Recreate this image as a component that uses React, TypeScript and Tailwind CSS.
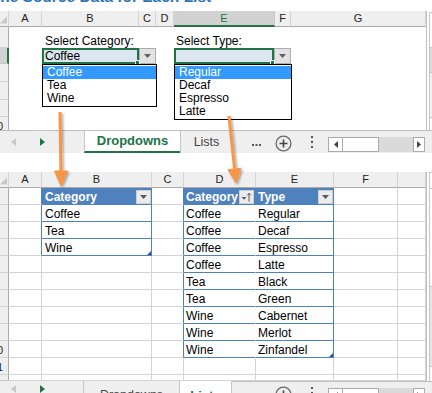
import React from 'react';

const FONT = "font-['Liberation_Sans',Arial,sans-serif]";

function DownTri({ color = '#595959' }: { color?: string }) {
  return (
    <svg width="7" height="4" viewBox="0 0 7 4">
      <path d="M0 0H7L3.5 4Z" fill={color} />
    </svg>
  );
}

function FilterBtn({ sort = false }: { sort?: boolean }) {
  return (
    <div className="w-[15px] h-[14px] bg-[#ececec] border border-[#cfcfcf] flex items-center justify-center shrink-0">
      {sort ? (
        <svg width="11" height="10" viewBox="0 0 11 10">
          <path d="M0.5 5H5.5L3 7.8Z" fill="#595959" />
          <path d="M8 9.5V1.5" stroke="#595959" strokeWidth="1" />
          <path d="M6.3 3.3L8 1.2L9.7 3.3" stroke="#595959" strokeWidth="1" fill="none" />
        </svg>
      ) : (
        <DownTri />
      )}
    </div>
  );
}

function Corner() {
  return (
    <div className="bg-[#efefef] border-r border-r-[#d4d4d4] border-b border-b-[#ababab] flex items-end justify-end overflow-hidden">
      <svg width="8" height="8" viewBox="0 0 8 8" className="mb-[2px] mr-px">
        <path d="M8 0V8H0Z" fill="#c8c8c8" />
      </svg>
    </div>
  );
}

function Title() {
  return (
    <div className="h-[11px] overflow-hidden">
      <div className="-mt-[12px] -ml-[5px] whitespace-nowrap text-[15.5px] leading-[18px] font-bold text-[#2e74b5]">
        the Source Data for Each List
      </div>
    </div>
  );
}

function Combo({ value, w, bw, lw, items }: { value: string; w: string; bw: string; lw: string; items: string[] }) {
  return (
    <div className="relative flex h-full">
      <div className={`${w} h-full border-2 border-[#217346] bg-[#dce6f1] flex items-center pl-px text-[12px] leading-[14px] relative`}>
        {value}
        <div className="absolute right-[-3px] bottom-[-3px] w-[5px] h-[5px] bg-[#217346] border border-white" />
      </div>
      <div className={`${bw} h-full bg-[#e3e3e3] border border-[#adadad] flex items-center justify-center`}>
        <DownTri color="#606060" />
      </div>
      <div className={`absolute left-0 top-full ${lw} border border-black bg-white py-px z-10`}>
        {items.map((it, i) => (
          <div
            key={it}
            className={
              i === 0
                ? 'h-[13px] leading-[13px] pl-[4px] text-[12px] bg-[#3399ff] text-white'
                : 'h-[13px] leading-[13px] pl-[4px] text-[12px] text-black'
            }
          >
            {it}
          </div>
        ))}
      </div>
    </div>
  );
}

function TopSheet() {
  const cols = ['A', 'B', 'C', 'D', 'E', 'F', 'G'];
  return (
    <div className="flex">
      <div className="grid w-[427px] grid-cols-[9px_33px_97px_17px_18px_101px_16px_135px] grid-rows-[16px_21px_16px_18px_18px_17px_13px] border-r border-r-[#bfbfbf]">
        <Corner />
        {cols.map((c) => (
          <div
            key={c}
            className={
              c === 'E'
                ? 'flex items-center justify-center bg-[#d2d2d2] border-r border-r-[#c6c6c6] border-b-2 border-b-[#217346] text-[11px] text-[#217346]'
                : 'flex items-center justify-center bg-[#efefef] border-r border-r-[#d4d4d4] border-b border-b-[#ababab] text-[11px] text-[#222]'
            }
          >
            {c}
          </div>
        ))}
        <div className="col-start-1 row-start-2 bg-[#efefef] border-r border-r-[#ababab] border-b border-b-[#d4d4d4]" />
        <div className="col-start-1 row-start-3 bg-[#d2d2d2] border-r-2 border-r-[#217346] border-b border-b-[#c6c6c6]" />
        <div className="col-start-1 row-start-4 bg-[#efefef] border-r border-r-[#ababab] border-b border-b-[#d4d4d4]" />
        <div className="col-start-1 row-start-5 bg-[#efefef] border-r border-r-[#ababab] border-b border-b-[#d4d4d4]" />
        <div className="col-start-1 row-start-6 bg-[#efefef] border-r border-r-[#ababab] border-b border-b-[#d4d4d4]" />
        <div className="col-start-1 row-start-7 bg-[#efefef] border-r border-r-[#ababab] overflow-hidden text-[11px] leading-[13px] text-[#222] pt-[3px]">
          <span className="block -ml-[3px]">0</span>
        </div>

        <div className="col-start-3 col-span-2 row-start-2 flex items-end pl-[3px] text-[12px] leading-[14px] whitespace-nowrap">
          Select Category:
        </div>
        <div className="col-start-6 col-span-2 row-start-2 flex items-end pl-[2px] text-[12px] leading-[14px] whitespace-nowrap">
          Select Type:
        </div>
        <div className="col-start-3 col-span-2 row-start-3">
          <Combo value="Coffee" w="w-[97px]" bw="w-[17px]" lw="w-[115px]" items={['Coffee', 'Tea', 'Wine']} />
        </div>
        <div className="col-start-6 col-span-2 row-start-3">
          <Combo value="" w="w-[101px]" bw="w-[17px]" lw="w-[118px]" items={['Regular', 'Decaf', 'Espresso', 'Latte']} />
        </div>
      </div>
      <div className="w-[5px] flex">
        <div className="w-[2px]" />
        <div className="w-[3px] mt-px flex flex-col border-l border-[#c6c6c6]">
          <div className="h-[35px] bg-white border-t border-[#c6c6c6]" />
          <div className="h-[25px] bg-[#dcdcdc] border-t border-[#c6c6c6]" />
          <div className="h-[45px] bg-[#f0f0f0] border-t border-[#c6c6c6]" />
          <div className="flex-1 bg-white border-t border-[#c6c6c6]" />
        </div>
      </div>
    </div>
  );
}

function HScroll() {
  return (
    <div className="w-[97px] h-[15px] flex mt-[6px]">
      <div className="w-[15px] h-full bg-white border border-[#ababab] flex items-center justify-center">
        <svg width="4" height="7" viewBox="0 0 4 7">
          <path d="M4 0V7L0 3.5Z" fill="#444" />
        </svg>
      </div>
      <div className="w-[36px] h-full bg-white border-y border-r border-[#ababab]" />
      <div className="w-[34px] h-full bg-[#dadada]" />
      <div className="w-[12px] h-full bg-white border border-[#ababab] flex items-center justify-center">
        <svg width="4" height="7" viewBox="0 0 4 7">
          <path d="M0 0V7L4 3.5Z" fill="#444" />
        </svg>
      </div>
    </div>
  );
}

function BarTools() {
  return (
    <>
      <div className="w-[43px] flex items-center">
        <svg width="9" height="2" viewBox="0 0 9 2" className="ml-[20px] mt-[5px]">
          <rect x="0" y="0" width="2" height="2" fill="#555" />
          <rect x="3.5" y="0" width="2" height="2" fill="#555" />
          <rect x="7" y="0" width="2" height="2" fill="#555" />
        </svg>
      </div>
      <div className="w-[17px] pt-[4px]">
        <svg width="17" height="17" viewBox="0 0 17 17">
          <circle cx="8.5" cy="8.5" r="7.4" fill="none" stroke="#6a6a6a" strokeWidth="1.3" />
          <path d="M8.5 4.5V12.5M4.5 8.5H12.5" stroke="#444" strokeWidth="1.6" />
        </svg>
      </div>
      <div className="w-[36px] flex items-center justify-center pl-[4px]">
        <svg width="2" height="12" viewBox="0 0 2 12">
          <rect x="0" y="0" width="2" height="2" fill="#555" />
          <rect x="0" y="5" width="2" height="2" fill="#555" />
          <rect x="0" y="10" width="2" height="2" fill="#555" />
        </svg>
      </div>
      <HScroll />
    </>
  );
}

function NavArrows() {
  return (
    <div className="w-[84px] h-[22px] flex items-center shrink-0">
      <svg width="5" height="8" viewBox="0 0 5 8" className="ml-[11px]">
        <path d="M5 0V8L0 4Z" fill="#c8c8c8" />
      </svg>
      <svg width="5" height="8" viewBox="0 0 5 8" className="ml-[24px]">
        <path d="M0 0V8L5 4Z" fill="#217346" />
      </svg>
    </div>
  );
}

function TopBar() {
  return (
    <div className="h-[23px] flex bg-[#efefef] border-t border-[#bfbfbf]">
      <NavArrows />
      <div className="w-[96px] bg-white border-l border-[#c6c6c6] border-b-2 border-b-[#217346] flex items-center justify-center font-bold text-[13px] text-[#217346]">
        Dropdowns
      </div>
      <div className="w-[52px] border-l border-[#c6c6c6] flex items-center justify-center text-[12.5px] text-[#444]">
        Lists
      </div>
      <BarTools />
    </div>
  );
}

function BottomBar() {
  return (
    <div className="h-[23px] flex">
      <div className="w-[180px] flex flex-col">
        <div className="h-[3px] bg-white" />
        <div className="flex-1 flex bg-[#efefef] border-t border-[#c6c6c6] -mt-px">
          <div className="w-[84px] border-r border-[#c6c6c6] -mt-[3px]">
            <NavArrows />
          </div>
          <div className="w-[96px] border-r border-[#c6c6c6] flex justify-center pt-[5px] text-[12.5px] text-[#444]">
            Dropdowns
          </div>
        </div>
      </div>
      <div className="w-[52px] bg-white border-r border-[#c6c6c6] border-b-2 border-b-[#217346] flex justify-center pt-[5px] font-bold text-[13px] text-[#217346]">
        Lists
      </div>
      <div className="flex-1 flex bg-[#efefef] border-t border-[#bfbfbf]">
        <BarTools />
      </div>
    </div>
  );
}

const t2data = [
  ['Category', 'Type'],
  ['Coffee', 'Regular'],
  ['Coffee', 'Decaf'],
  ['Coffee', 'Espresso'],
  ['Coffee', 'Latte'],
  ['Tea', 'Black'],
  ['Tea', 'Green'],
  ['Wine', 'Cabernet'],
  ['Wine', 'Merlot'],
  ['Wine', 'Zinfandel'],
];
const t1data = ['Category', 'Coffee', 'Tea', 'Wine'];

function Handle() {
  return (
    <svg width="4" height="4" viewBox="0 0 4 4" className="absolute right-0 bottom-0">
      <path d="M4 0V4H0Z" fill="#2f4f9f" />
    </svg>
  );
}

function cellClass(r: number, c: number) {
  if (c === 0) {
    return 'bg-[#efefef] border-r border-r-[#ababab] border-b border-b-[#d4d4d4] overflow-hidden text-[11px] leading-[14px] text-[#222] flex items-end';
  }
  const t1 = c === 2 && r <= 3;
  const t2 = (c === 4 || c === 5) && r <= 9;
  const inT = t1 || t2;
  const head = inT && r === 0;
  let rb = 'border-r-[#d4d4d4]';
  if (t1) rb = 'border-r-[#4f81bd]';
  else if (t2) rb = c === 5 || head ? 'border-r-[#4f81bd]' : 'border-r-white';
  else if ((c === 1 && r <= 3) || (c === 3 && r <= 9)) rb = 'border-r-[#4f81bd]';
  const bb = inT ? 'border-b-[#4f81bd]' : 'border-b-[#d4d4d4]';
  const bg = head ? 'bg-[#4f81bd] text-white font-bold' : 'bg-white text-black';
  const pad = c === 2 ? 'pl-[3px]' : c === 4 || c === 5 ? 'pl-[2px]' : '';
  return `relative flex items-end justify-between border-r border-b ${rb} ${bb} ${bg} ${pad} text-[12px] leading-[14px] whitespace-nowrap overflow-hidden`;
}

function BottomSheet() {
  const cols = ['', 'A', 'B', 'C', 'D', 'E', 'F', ''];
  const rows = Array.from({ length: 12 }, (_, i) => i);
  const rowNum: Record<number, string> = { 9: '0', 10: '1' };
  return (
    <div className="flex">
      <div className="grid w-[427px] grid-cols-[9px_33px_110px_32px_72px_78px_64px_28px] grid-rows-[16px_repeat(11,17px)_6px] border-r border-r-[#bfbfbf]">
        <Corner />
        {cols.slice(1).map((c, i) => (
          <div
            key={'h' + i}
            className="flex items-center justify-center bg-[#efefef] border-r border-r-[#d4d4d4] border-b border-b-[#ababab] text-[11px] text-[#222]"
          >
            {c}
          </div>
        ))}
        {rows.map((r) =>
          cols.map((_, c) => {
            let content: React.ReactNode = null;
            if (c === 0 && rowNum[r]) {
              content = <span className="block -ml-[3px]">{rowNum[r]}</span>;
            } else if (c === 2 && r <= 3) {
              content = (
                <>
                  <span>{t1data[r]}</span>
                  {r === 0 && <FilterBtn />}
                  {r === 3 && <Handle />}
                </>
              );
            } else if ((c === 4 || c === 5) && r <= 9) {
              content = (
                <>
                  <span>{t2data[r][c - 4]}</span>
                  {r === 0 && (
                    <div className={c === 4 ? 'mr-px' : ''}>
                      <FilterBtn sort={c === 4} />
                    </div>
                  )}
                  {r === 9 && c === 5 && <Handle />}
                </>
              );
            }
            return (
              <div key={r + '-' + c} className={cellClass(r, c)}>
                {content}
              </div>
            );
          })
        )}
      </div>
      <div className="w-[5px] flex">
        <div className="w-[2px]" />
        <div className="w-[3px] flex flex-col border-l border-[#c6c6c6]">
          <div className="h-[16px] bg-white border-t border-[#c6c6c6]" />
          <div className="h-[98px] bg-white border-t border-[#c6c6c6]" />
          <div className="h-[80px] bg-[#e6e6e6] border-t border-[#c6c6c6]" />
          <div className="flex-1 bg-white border-t border-[#c6c6c6]" />
        </div>
      </div>
    </div>
  );
}

function Arrows() {
  return (
    <svg width="432" height="393" viewBox="0 0 432 393" className="absolute inset-0 pointer-events-none z-20">
      <defs>
        <filter id="sh" x="-50%" y="-50%" width="200%" height="200%">
          <feDropShadow dx="1.5" dy="1.5" stdDeviation="1" floodColor="#000" floodOpacity="0.35" />
        </filter>
      </defs>
      <g filter="url(#sh)" fill="#f79646" stroke="#f79646">
        <path d="M60 112L61 174" strokeWidth="3" fill="none" />
        <path d="M54.5 171L67.5 171L61 186Z" strokeWidth="1" />
        <path d="M229 116L234.7 170" strokeWidth="3" fill="none" />
        <path d="M228 169.7L241 168.3L236 183Z" strokeWidth="1" />
      </g>
    </svg>
  );
}

export default function App() {
  return (
    <div className={`w-[432px] h-[393px] overflow-hidden bg-white relative ${FONT} text-black`}>
      <Title />
      <TopSheet />
      <TopBar />
      <div className="h-[19px] bg-white" />
      <BottomSheet />
      <BottomBar />
      <Arrows />
    </div>
  );
}
